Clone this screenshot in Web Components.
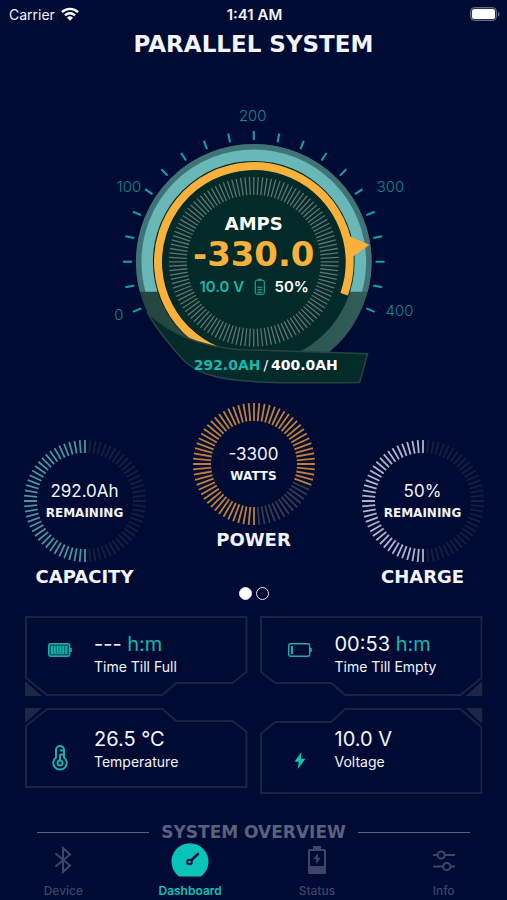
<!DOCTYPE html>
<html lang="en">
<head>
<meta charset="utf-8">
<meta name="viewport" content="width=device-width, initial-scale=1">
<title>Parallel System</title>
<style>
  body {
    margin: 0;
    background: #000b33;
    color: #f2f4fb;
    font-family: Inter, "Liberation Sans", sans-serif;
    --display: "DejaVu Sans", sans-serif;
    --teal: #16b8ae;
    --amber: #f9b13c;
    --line: #1a2342;
    --muted: #3d4669;
  }
</style>
</head>
<body>
<battery-app></battery-app>

<script>
(function () {
  'use strict';

  // radial tick marks, angles in degrees clockwise from the top
  function ticks(cx, cy, r1, r2, from, to, step) {
    let d = '';
    for (let a = from; a <= to; a += step) {
      const s = Math.sin(a * Math.PI / 180);
      const c = Math.cos(a * Math.PI / 180);
      d += `M${(cx + r1 * s).toFixed(1)} ${(cy - r1 * c).toFixed(1)}L${(cx + r2 * s).toFixed(1)} ${(cy - r2 * c).toFixed(1)}`;
    }
    return d;
  }

  class BaseElement extends HTMLElement {
    constructor() {
      super();
      this.attachShadow({mode: 'open'});
    }

    connectedCallback() {
      this.shadowRoot.innerHTML = this.template;
    }
  }

  customElements.define('status-bar', class StatusBar extends BaseElement {
    get template() {
      return `
    <style>
      :host {
        display: grid;
        grid-template-columns: 1fr auto 1fr;
        align-items: center;
        height: 28px;
        padding: 0 7px 0 9px;
        font-size: 14px;
      }
      .carrier { display: flex; align-items: center; gap: 6px; }
      .time { font-size: 15px; font-weight: 600; }
      .battery { justify-self: end; display: block; }
    </style>
    <span class="carrier">Carrier
      <svg width="18" height="14" viewBox="0 0 18 14" fill="none" stroke="#fff" stroke-width="2.4">
        <path d="M1 5.2a11.3 11.3 0 0 1 16 0M4 8.4a7 7 0 0 1 10 0"/>
        <path d="M9 13.8 6 10.8a4.3 4.3 0 0 1 6 0z" fill="#fff" stroke="none"/>
      </svg>
    </span>
    <span class="time">1:41 AM</span>
    <svg class="battery" width="30" height="14" viewBox="0 0 30 14">
      <rect x=".5" y=".5" width="26" height="13" rx="4" fill="#2a3050" stroke="#666c88"/>
      <rect x="2" y="2" width="23" height="10" rx="2.5" fill="#fff"/>
      <path d="M28 5v4.5c2-.6 2-3.9 0-4.5z" fill="#666c88"/>
    </svg>
    `;
    }
  });

  customElements.define('amp-gauge', class AmpGauge extends BaseElement {
    get template() {
      return `
    <style>
      :host { display: block; width: 65%; min-width: 280px; max-width: 480px; }
      svg { display: block; width: 100%; }
      text { text-anchor: middle; }
      .scale { fill: #12868d; font-size: 15px; font-weight: 300; }
      .display { font-family: var(--display); font-weight: 700; fill: #fff; }
      .title { font-size: 18px; }
      .amps { font-size: 34px; fill: var(--amber); }
      .small { font-size: 15px; font-weight: 600; fill: #fff; }
      .teal { fill: var(--teal); }
      .total { font-size: 14px; }
      .slash { font-weight: 400; }
    </style>
    <svg viewBox="89 100 330 292" role="img" aria-label="Amps gauge">
      <defs>
        <linearGradient id="ring" x1="0" y1="0" x2="1" y2="0">
          <stop offset="0" stop-color="#24443f"/>
          <stop offset="1" stop-color="#315d59"/>
        </linearGradient>
        <clipPath id="upper"><path d="M130 140h250v152h-250z"/></clipPath>
      </defs>
      <path d="${ticks(254, 262, 122, 131, -112.5, 112.5, 11.25)}" stroke="#0ea5a2" stroke-width="2"/>
      <circle cx="254" cy="262" r="118" fill="url(#ring)"/>
      <g clip-path="url(#upper)">
        <circle cx="254" cy="262" r="115" fill="none" stroke="#3f7377" stroke-width="6"/>
        <circle cx="254" cy="262" r="106" fill="none" stroke="#69b7b6" stroke-width="13"/>
      </g>
      <circle cx="254" cy="262" r="101" fill="#022a28"/>
      <path d="${ticks(254, 262, 67, 85, 0, 357, 3)}" stroke="#62736f" stroke-width="1.3"/>
      <path d="M226 354A96 96 0 1 1 344.5 294.5" fill="none" stroke="var(--amber)" stroke-width="8"/>
      <path d="M346 234Q350 237 370 245L350 259z" fill="var(--amber)"/>
      <path d="M147 312C155 327 165 339 176 352C189 369 204 377 240 381Q270 384 360 383L368 354L309 352L240 350Q180 345 147 312z" fill="#022b29" stroke="#284441" stroke-width="1.5"/>

      <text class="scale" x="119" y="320">0</text>
      <text class="scale" x="129" y="192">100</text>
      <text class="scale" x="253" y="121">200</text>
      <text class="scale" x="391" y="192">300</text>
      <text class="scale" x="400" y="316">400</text>

      <text class="display title" x="254" y="230">AMPS</text>
      <text class="display amps" x="254" y="266">-330.0</text>
      <text class="small teal" x="222" y="292">10.0 V</text>
      <g fill="none" stroke="var(--teal)">
        <rect x="255.5" y="280.5" width="9" height="14" rx="1.5"/>
        <path d="M258 279.5h4M257.5 287.5h5M257.5 290h5M257.5 292.5h5"/>
      </g>
      <text class="small" x="292" y="292">50%</text>
      <text class="display total" x="266" y="370"><tspan class="teal">292.0AH</tspan><tspan class="slash" dx="3">/</tspan><tspan dx="3">400.0AH</tspan></text>
    </svg>
    `;
    }
  });

  customElements.define('tick-dial', class TickDial extends BaseElement {
    get template() {
      const end = Number(this.getAttribute('end'));
      const inner = Number(this.getAttribute('inner'));
      return `
    <style>
      :host {
        display: grid;
        grid-template-columns: 122px;
        justify-items: center;
        justify-content: center;
        row-gap: 4px;
      }
      svg, .value { grid-area: 1 / 1; }
      svg { display: block; width: 122px; height: 122px; }
      .value { align-self: center; text-align: center; font-size: 17px; line-height: 24px; }
      .unit { font: 700 12px/20px var(--display); }
      h2 { margin: 0; font: 700 18px/22px var(--display); }
    </style>
    <svg viewBox="0 0 122 122" aria-hidden="true">
      <path d="${ticks(61, 61, inner, 61, end + 5, 175, 5)}" stroke="${this.getAttribute('rest')}" stroke-width="1.8"/>
      <path d="${ticks(61, 61, inner, 61, -180, end, 5)}" stroke="${this.getAttribute('color')}" stroke-width="1.8"/>
    </svg>
    <div class="value"><slot></slot><div class="unit"><slot name="unit"></slot></div></div>
    <h2><slot name="title"></slot></h2>
    `;
    }
  });

  customElements.define('page-dots', class PageDots extends BaseElement {
    get template() {
      return `
    <style>
      :host { display: flex; justify-content: center; gap: 4px; }
      button {
        box-sizing: border-box;
        width: 13px;
        height: 13px;
        padding: 0;
        border: 1px solid #e4e7f2;
        border-radius: 50%;
        background: none;
      }
      .on { background: #fff; }
    </style>
    <button class="on" aria-label="Page 1"></button>
    <button aria-label="Page 2"></button>
    `;
    }
  });

  customElements.define('info-card', class InfoCard extends BaseElement {
    get template() {
      return `
    <style>
      :host { display: grid; height: 80px; }
      :host([tall]) { height: 86px; }
      .frame, .content { grid-area: 1 / 1; }
      .frame { display: block; width: 100%; height: 100%; min-width: 0; }
      .frame path { vector-effect: non-scaling-stroke; }
      :host([flip="x"]) .frame { transform: scale(-1, 1); }
      :host([flip="y"]) .frame { transform: scale(1, -1); }
      :host([flip="xy"]) .frame { transform: scale(-1, -1); }
      .content {
        display: grid;
        grid-template-columns: 69px 1fr;
        align-content: start;
        padding-top: 16px;
      }
      :host([flip*="y"]) .content { padding-top: 19px; }
      :host([flip^="x"]) .content { grid-template-columns: 75px 1fr; }
      .icon { display: grid; place-items: center; padding-bottom: 10px; }
      :host([flip^="x"]) .icon { padding-left: 6px; }
      :host([flip*="y"]) .icon { align-self: end; padding-bottom: 2px; }
      :host([flip="xy"]) .icon { padding-bottom: 4px; }
      .value { font-size: 20px; line-height: 24px; }
      .label { font-size: 14px; line-height: 22px; }
    </style>
    <svg class="frame" viewBox="0 0 222 80" preserveAspectRatio="none" fill="none" stroke="var(--line)" stroke-width="2">
      <path d="M1 1H221V56L207 67H151L137 79H22L1 62z"/>
      <path d="M0 65V80H17z" fill="#1c2645" stroke="none"/>
    </svg>
    <div class="content">
      <div class="icon"><slot name="icon"></slot></div>
      <div>
        <div class="value"><slot></slot></div>
        <div class="label"><slot name="label"></slot></div>
      </div>
    </div>
    `;
    }
  });

  customElements.define('section-rule', class SectionRule extends BaseElement {
    get template() {
      return `
    <style>
      :host { display: flex; align-items: center; gap: 12px; margin: 0 37px; color: #59617e; }
      :host::before, :host::after { content: ""; flex: 1; height: 1px; background: #59617e; }
      h2 { margin: 0; font: 700 17px/20px var(--display); }
    </style>
    <h2><slot></slot></h2>
    `;
    }
  });

  customElements.define('tab-item', class TabItem extends BaseElement {
    get template() {
      return `
    <style>
      :host { display: block; flex: 1; }
      button {
        display: grid;
        justify-items: center;
        align-items: center;
        grid-template-rows: 36px 22px;
        width: 100%;
        padding: 0;
        border: 0;
        background: none;
        color: var(--muted);
        font: 500 12px/18px Inter, "Liberation Sans", sans-serif;
      }
      :host([selected]) button { color: #08c4b8; font-weight: 600; }
      span { align-self: end; }
    </style>
    <button><slot name="icon"></slot><span><slot></slot></span></button>
    `;
    }
  });

  customElements.define('battery-app', class BatteryApp extends BaseElement {
    get template() {
      return `
    <style>
      :host { display: flex; flex-direction: column; min-height: 100vh; }
      h1 { margin: 4px 0 0; text-align: center; font: 700 23px/24px var(--display); }
      amp-gauge { margin: 44px auto 0; }
      .dials {
        display: grid;
        grid-template-columns: repeat(3, 1fr);
        align-items: end;
        margin-top: 11px;
      }
      .dials > tick-dial { margin-bottom: 12px; }
      page-dots { margin-top: 36px; }
      .cards {
        display: grid;
        grid-template-columns: 1fr 1fr;
        align-items: start;
        gap: 12px;
        margin: 16px 25px 0;
      }
      section-rule { margin-top: auto; }
      nav { display: flex; }
      svg { display: block; }
      .hm { color: var(--teal); }
    </style>
    <status-bar></status-bar>
    <h1>PARALLEL SYSTEM</h1>
    <amp-gauge></amp-gauge>
    <div class="dials">
      <tick-dial end="0" inner="48" color="#4a93a3" rest="#141f43">
        292.0Ah<span slot="unit">REMAINING</span><span slot="title">CAPACITY</span>
      </tick-dial>
      <div>
        <tick-dial end="110" inner="43" color="#bd7f3b" rest="#343d50">
          -3300<span slot="unit">WATTS</span><span slot="title">POWER</span>
        </tick-dial>
        <page-dots></page-dots>
      </div>
      <tick-dial end="0" inner="48" color="#aeb4cf" rest="#141f43">
        50%<span slot="unit">REMAINING</span><span slot="title">CHARGE</span>
      </tick-dial>
    </div>
    <div class="cards">
      <info-card>
        <svg slot="icon" width="24" height="14" viewBox="0 0 24 14" fill="none" stroke="#14b0a6">
          <rect x=".7" y=".7" width="21" height="12.6" rx="2" fill="#0b5d6b" stroke-width="1.4"/>
          <path d="M22.8 5v4" stroke-width="2"/>
          <path d="M4 3v8M6.8 3v8M9.6 3v8M12.4 3v8M15.2 3v8M18.2 3v8" stroke-width="2"/>
        </svg>
        --- <span class="hm">h:m</span><span slot="label">Time Till Full</span>
      </info-card>
      <info-card flip="x">
        <svg slot="icon" width="24" height="14" viewBox="0 0 24 14" fill="none" stroke="#14b0a6">
          <rect x=".7" y=".7" width="21" height="12.6" rx="2" stroke-width="1.4"/>
          <path d="M22.8 5v4" stroke-width="2"/>
          <path d="M4 3v8" stroke-width="2"/>
        </svg>
        00:53 <span class="hm">h:m</span><span slot="label">Time Till Empty</span>
      </info-card>
      <info-card flip="y">
        <svg slot="icon" width="16" height="26" viewBox="0 0 16 26" fill="none" stroke="#12b5ab" stroke-width="2">
          <path d="M4 12.5V5a4 4 0 0 1 8 0v7.5a6.7 6.7 0 1 1-8 0z"/>
          <circle cx="8" cy="18" r="2.5"/>
          <path d="M8 15.5V9M8 5.5h4M8.5 9.5h3.5"/>
        </svg>
        26.5 °C<span slot="label">Temperature</span>
      </info-card>
      <info-card flip="xy" tall>
        <svg slot="icon" width="12" height="17" viewBox="0 0 12 17" fill="#10c4b6">
          <path d="M7.5 0 .5 9.8h4.3L3.8 17l7.7-10.2H6.8z"/>
        </svg>
        10.0 V<span slot="label">Voltage</span>
      </info-card>
    </div>
    <section-rule>SYSTEM OVERVIEW</section-rule>
    <nav>
      <tab-item>
        <svg slot="icon" width="18" height="28" viewBox="0 0 18 28" fill="none" stroke="currentColor" stroke-width="2">
          <path d="M1.5 7.5 16 19.5 9 26V2l7 6.5L1.5 20.5"/>
        </svg>
        Device
      </tab-item>
      <tab-item selected>
        <svg slot="icon" width="38" height="34" viewBox="0 0 38 34">
          <path d="M8 33.5a18.5 18.5 0 1 1 22 0z" fill="#08c4b8"/>
          <g fill="none" stroke="#000b33" stroke-linecap="round">
            <circle cx="18.5" cy="19" r="2.3" stroke-width="2"/>
            <path d="M20.5 17 27 11" stroke-width="2.4"/>
          </g>
        </svg>
        Dashboard
      </tab-item>
      <tab-item>
        <svg slot="icon" width="18" height="28" viewBox="0 0 18 28" fill="currentColor">
          <path d="M5 0h8v3h3.5a1.5 1.5 0 0 1 1.5 1.5v22a1.5 1.5 0 0 1-1.5 1.5h-15A1.5 1.5 0 0 1 0 26.5v-22A1.5 1.5 0 0 1 1.5 3H5zM2 5v15h14V5z" fill-rule="evenodd"/>
          <path d="M9.8 7 5.5 13h2.7v5l4.3-6.2H9.8z"/>
        </svg>
        Status
      </tab-item>
      <tab-item>
        <svg slot="icon" width="24" height="24" viewBox="0 0 24 24" fill="none" stroke="currentColor" stroke-width="2">
          <path d="M1 7h4.5M13 7h10M1 18.5h10M18.5 18.5H23"/>
          <circle cx="9.2" cy="7" r="3.6"/>
          <circle cx="14.8" cy="18.5" r="3.6"/>
        </svg>
        Info
      </tab-item>
    </nav>
    `;
    }
  });

}());
</script>
</body>
</html>
